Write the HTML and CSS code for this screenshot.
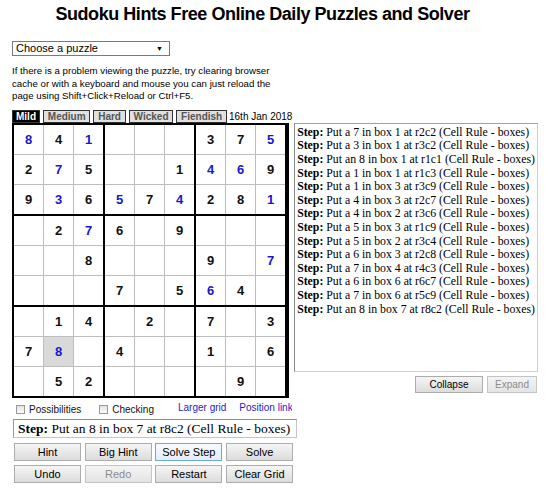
FILE: index.html
```html
<!DOCTYPE html>
<html>
<head>
<meta charset="utf-8">
<title>Sudoku Hints</title>
<link rel="stylesheet" href="styles.css">
</head>
<body>
<div class="page">
  <h1 class="title">Sudoku Hints Free Online Daily Puzzles and Solver</h1>
  <div class="picker"><span class="picker-text">Choose a puzzle</span><span class="picker-arrow">▼</span></div>
  <p class="note">If there is a problem viewing the puzzle, try clearing browser cache or with a keyboard and mouse you can just reload the page using Shift+Click+Reload or Ctrl+F5.</p>

  <div class="main">
    <div class="left">
      <div class="tabs">
        <span class="tab tab-active">Mild</span>
        <span class="tab">Medium</span>
        <span class="tab">Hard</span>
        <span class="tab">Wicked</span>
        <span class="tab">Fiendish</span>
        <span class="date">16th Jan 2018</span>
      </div>
      <div class="board">
        <div class="box">
          <div class="cell blue">8</div><div class="cell">4</div><div class="cell blue">1</div>
          <div class="cell">2</div><div class="cell blue">7</div><div class="cell">5</div>
          <div class="cell">9</div><div class="cell blue">3</div><div class="cell">6</div>
        </div>
        <div class="box">
          <div class="cell"></div><div class="cell"></div><div class="cell"></div>
          <div class="cell"></div><div class="cell"></div><div class="cell">1</div>
          <div class="cell blue">5</div><div class="cell">7</div><div class="cell blue">4</div>
        </div>
        <div class="box">
          <div class="cell">3</div><div class="cell">7</div><div class="cell blue">5</div>
          <div class="cell blue">4</div><div class="cell blue">6</div><div class="cell">9</div>
          <div class="cell">2</div><div class="cell">8</div><div class="cell blue">1</div>
        </div>
        <div class="box">
          <div class="cell"></div><div class="cell">2</div><div class="cell blue">7</div>
          <div class="cell"></div><div class="cell"></div><div class="cell">8</div>
          <div class="cell"></div><div class="cell"></div><div class="cell"></div>
        </div>
        <div class="box">
          <div class="cell">6</div><div class="cell"></div><div class="cell">9</div>
          <div class="cell"></div><div class="cell"></div><div class="cell"></div>
          <div class="cell">7</div><div class="cell"></div><div class="cell">5</div>
        </div>
        <div class="box">
          <div class="cell"></div><div class="cell"></div><div class="cell"></div>
          <div class="cell">9</div><div class="cell"></div><div class="cell blue">7</div>
          <div class="cell blue">6</div><div class="cell">4</div><div class="cell"></div>
        </div>
        <div class="box">
          <div class="cell"></div><div class="cell">1</div><div class="cell">4</div>
          <div class="cell">7</div><div class="cell blue selected">8</div><div class="cell"></div>
          <div class="cell"></div><div class="cell">5</div><div class="cell">2</div>
        </div>
        <div class="box">
          <div class="cell"></div><div class="cell">2</div><div class="cell"></div>
          <div class="cell">4</div><div class="cell"></div><div class="cell"></div>
          <div class="cell"></div><div class="cell"></div><div class="cell"></div>
        </div>
        <div class="box">
          <div class="cell">7</div><div class="cell"></div><div class="cell">3</div>
          <div class="cell">1</div><div class="cell"></div><div class="cell">6</div>
          <div class="cell"></div><div class="cell">9</div><div class="cell"></div>
        </div>
      </div>
    </div>

    <div class="right">
      <div class="log">
        <div class="log-line"><b>Step:</b> Put a 7 in box 1 at r2c2 (Cell Rule - boxes)</div>
        <div class="log-line"><b>Step:</b> Put a 3 in box 1 at r3c2 (Cell Rule - boxes)</div>
        <div class="log-line"><b>Step:</b> Put an 8 in box 1 at r1c1 (Cell Rule - boxes)</div>
        <div class="log-line"><b>Step:</b> Put a 1 in box 1 at r1c3 (Cell Rule - boxes)</div>
        <div class="log-line"><b>Step:</b> Put a 1 in box 3 at r3c9 (Cell Rule - boxes)</div>
        <div class="log-line"><b>Step:</b> Put a 4 in box 3 at r2c7 (Cell Rule - boxes)</div>
        <div class="log-line"><b>Step:</b> Put a 4 in box 2 at r3c6 (Cell Rule - boxes)</div>
        <div class="log-line"><b>Step:</b> Put a 5 in box 3 at r1c9 (Cell Rule - boxes)</div>
        <div class="log-line"><b>Step:</b> Put a 5 in box 2 at r3c4 (Cell Rule - boxes)</div>
        <div class="log-line"><b>Step:</b> Put a 6 in box 3 at r2c8 (Cell Rule - boxes)</div>
        <div class="log-line"><b>Step:</b> Put a 7 in box 4 at r4c3 (Cell Rule - boxes)</div>
        <div class="log-line"><b>Step:</b> Put a 6 in box 6 at r6c7 (Cell Rule - boxes)</div>
        <div class="log-line"><b>Step:</b> Put a 7 in box 6 at r5c9 (Cell Rule - boxes)</div>
        <div class="log-line"><b>Step:</b> Put an 8 in box 7 at r8c2 (Cell Rule - boxes)</div>
      </div>
      <div class="log-actions">
        <button class="btn btn-small btn-collapse">Collapse</button>
        <button class="btn btn-small btn-expand" disabled>Expand</button>
      </div>
    </div>
  </div>

  <div class="options">
    <label class="opt opt-first"><input type="checkbox" class="check"><span>Possibilities</span></label>
    <label class="opt opt-second"><input type="checkbox" class="check"><span>Checking</span></label>
    <a class="link link-first" href="#">Larger grid</a>
    <a class="link link-second" href="#">Position link</a>
  </div>

  <div class="stepbox"><b>Step:</b> Put an 8 in box 7 at r8c2 (Cell Rule - boxes)</div>

  <div class="buttons">
    <button class="btn">Hint</button>
    <button class="btn">Big Hint</button>
    <button class="btn btn-focus">Solve Step</button>
    <button class="btn">Solve</button>
    <button class="btn">Undo</button>
    <button class="btn" disabled>Redo</button>
    <button class="btn">Restart</button>
    <button class="btn">Clear Grid</button>
  </div>
</div>
</body>
</html>
```

FILE: styles.css
```css
* { box-sizing: border-box; }

body {
  margin: 0;
  background: #fff;
  color: #000;
  font-family: "Liberation Sans", Arial, sans-serif;
}

.page {
  padding: 0 12px;
}

.title {
  margin: 3px 25px 0 0;
  font: bold 18px/23px "Liberation Sans", Arial, sans-serif;
  letter-spacing: -0.45px;
  text-align: center;
}

.picker {
  margin-top: 15px;
  width: 158px;
  height: 15px;
  border: 1px solid #7a7a7a;
  display: flex;
  align-items: center;
  justify-content: space-between;
  padding: 0 6px 0 3px;
  font-size: 11px;
  line-height: 13px;
}

.picker-arrow {
  font-size: 7px;
}

.note {
  margin: 9px 0 0;
  width: 272px;
  font-size: 9.7px;
  line-height: 12.6px;
}

.main {
  margin-top: 7px;
  display: flex;
}

.left {
  width: 284px;
}

.tabs {
  display: flex;
  align-items: flex-end;
  gap: 3px;
  height: 13px;
}

.tab {
  height: 13px;
  border: 1px solid #333;
  background: #e0e0e0;
  color: #555;
  font: bold 10px/11px "Liberation Sans", Arial, sans-serif;
  padding: 0 3.8px;
}

.tab-active {
  background: #000;
  color: #fff;
  padding: 0 3px;
}

.date {
  margin-left: -1px;
  font-size: 10px;
  line-height: 12px;
}

.board {
  display: grid;
  grid-template-columns: repeat(3, 89px);
  gap: 2px;
  width: 277px;
  background: #000;
  border: 2px solid #000;
}

.box {
  display: grid;
  grid-template-columns: repeat(3, 29px);
  grid-auto-rows: 29px;
  gap: 1px;
  background: #bdbdbd;
}

.cell {
  background: #fff;
  display: flex;
  align-items: center;
  justify-content: center;
  font: bold 13px "Liberation Sans", Arial, sans-serif;
  color: #111;
}

.cell.blue {
  color: #1818c8;
}

.cell.selected {
  background: #d9d9d9;
}

.right {
  width: 245px;
  padding-top: 13px;
}

.log {
  height: 249px;
  border: 1px solid #cfcfcf;
  border-top-color: #a0a0a0;
  border-left-color: #8a8a8a;
  padding: 2px 2px;
  font-family: "Liberation Serif", "Times New Roman", serif;
  font-size: 11.8px;
  line-height: 13.6px;
  white-space: nowrap;
  overflow: hidden;
}

.log-actions {
  margin-top: 4px;
  display: flex;
  justify-content: flex-end;
  gap: 4px;
  padding-right: 1px;
}

.btn {
  height: 18px;
  padding: 0;
  border: 1px solid #adadad;
  border-radius: 0;
  background: linear-gradient(#f5f5f5, #dcdcdc);
  color: #000;
  font: 11px "Liberation Sans", Arial, sans-serif;
}

.btn:disabled {
  color: #8c8c8c;
  border-color: #c4c4c4;
  background: linear-gradient(#f4f4f4, #e4e4e4);
}

.btn-focus {
  border-color: #6ea8de;
  background: linear-gradient(#f6fafd, #e4eef8);
}

.btn-small {
  height: 17px;
  font-size: 10px;
}

.btn-collapse { width: 68px; }
.btn-expand { width: 50px; }

.options {
  margin-top: 2px;
  width: 280px;
  height: 17px;
  display: flex;
  align-items: center;
  white-space: nowrap;
  overflow: hidden;
  font-size: 10px;
}

.opt {
  display: flex;
  align-items: center;
  gap: 4px;
  color: #111;
  padding-top: 3px;
}

.opt-first { margin-left: 4px; }
.opt-second { margin-left: 18px; }

.check {
  -webkit-appearance: none;
  appearance: none;
  margin: 0;
  width: 9px;
  height: 9px;
  border: 1px solid #999;
  background: linear-gradient(#e4e4e4, #fbfbfb);
}

.link {
  color: #2424c4;
  text-decoration: none;
  padding-bottom: 1px;
}

.link-first { margin-left: 24px; }
.link-second { margin-left: 13px; }

.stepbox {
  margin: 2px 0 0 1px;
  width: 284px;
  height: 19px;
  border: 1px solid #c4c4c4;
  border-top-color: #8e8e8e;
  border-left-color: #9a9a9a;
  padding-left: 4px;
  font-family: "Liberation Serif", "Times New Roman", serif;
  font-size: 13.5px;
  line-height: 17px;
  white-space: nowrap;
  overflow: hidden;
}

.buttons {
  margin: 5px 0 0 2px;
  display: grid;
  grid-template-columns: repeat(4, 67px);
  column-gap: 3.7px;
  row-gap: 4px;
}
```
